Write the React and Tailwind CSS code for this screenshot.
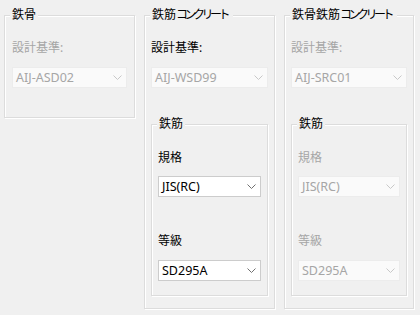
import React from 'react';

const font = { fontFamily: '"Noto Sans", "Noto Sans CJK JP", sans-serif' };

function Chevron({ disabled }) {
  return (
    <svg width="9" height="5" viewBox="0 0 9 5" className="shrink-0">
      <path d="M0.5 0.5 L4.5 4.5 L8.5 0.5" fill="none" stroke={disabled ? '#c8c8c8' : '#707070'} strokeWidth="1" />
    </svg>
  );
}

function Combo({ value, disabled }) {
  return (
    <div
      className={`flex h-[21px] w-full items-center justify-between border pl-[3px] pr-[4px] text-[12.5px] leading-4 ${
        disabled ? 'border-[#ececec] bg-[#fafafa] text-[#a6a6a6]' : 'border-[#cccccc] bg-white text-black'
      }`}
    >
      <span>{value}</span>
      <Chevron disabled={disabled} />
    </div>
  );
}

function Group({ title, kana, className = '', children }) {
  return (
    <fieldset
      className={`border border-[#dcdcdc] shadow-[1px_1px_0_#ffffff,inset_1px_1px_0_#ffffff] ${className}`}
    >
      <legend className="relative ml-[5px] whitespace-nowrap bg-[#f0f0f0] px-[2px] text-[12px] leading-[14px] text-black">
        {title}
        {kana ? <span className="tracking-[-3.5px] pr-[4px]">{kana}</span> : null}
      </legend>
      {children}
    </fieldset>
  );
}

function Label({ text, disabled }) {
  return <div className={`text-[12px] leading-4 ${disabled ? 'text-[#a6a6a6]' : 'text-black'}`}>{text}</div>;
}

function RebarGroup({ disabled }) {
  return (
    <Group title="鉄筋" className="mt-[29px]">
      <div className="px-[6px] pb-[14px] pt-[19px]">
        <Label text="規格" disabled={disabled} />
        <div className="mt-[10px]">
          <Combo value="JIS(RC)" disabled={disabled} />
        </div>
        <div className="mt-[36px]">
          <Label text="等級" disabled={disabled} />
        </div>
        <div className="mt-[11px]">
          <Combo value="SD295A" disabled={disabled} />
        </div>
      </div>
    </Group>
  );
}

export default function App() {
  return (
    <div className="h-[315px] w-[420px] overflow-hidden bg-[#f0f0f0] pl-[4px] pt-[8px]" style={font}>
      <div className="flex items-start gap-[9px]">
        <Group title="鉄骨" className="w-[131px]">
          <div className="px-[7px] pb-[29px] pt-[18px]">
            <Label text="設計基準:" disabled />
            <div className="mt-[11px]">
              <Combo value="AIJ-ASD02" disabled />
            </div>
          </div>
        </Group>

        <Group title="鉄筋" kana="コンクリート" className="w-[131px]">
          <div className="px-[6px] pb-[12px] pt-[18px]">
            <Label text="設計基準:" />
            <div className="mt-[11px]">
              <Combo value="AIJ-WSD99" disabled />
            </div>
            <RebarGroup />
          </div>
        </Group>

        <Group title="鉄骨鉄筋" kana="コンクリート" className="w-[130px]">
          <div className="px-[6px] pb-[12px] pt-[18px]">
            <Label text="設計基準:" disabled />
            <div className="mt-[11px]">
              <Combo value="AIJ-SRC01" disabled />
            </div>
            <RebarGroup disabled />
          </div>
        </Group>
      </div>
    </div>
  );
}
